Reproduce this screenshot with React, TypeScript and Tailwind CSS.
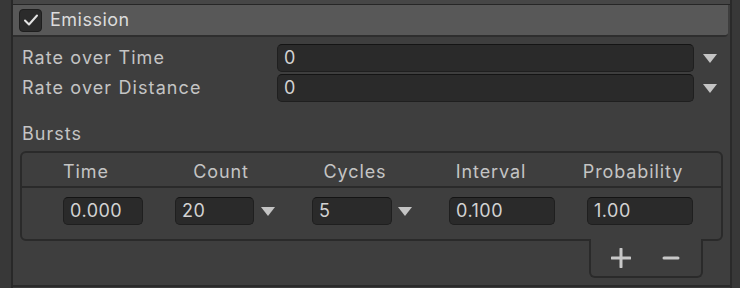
import React from 'react';

const font = { fontFamily: 'Inter, "Noto Sans", sans-serif' };

function Arrow() {
  return (
    <svg width="14" height="9" viewBox="0 0 14 9" className="shrink-0">
      <polygon points="0,0 14,0 7,9" fill="#c4c4c4" />
    </svg>
  );
}

function Field({ value, w, h = 28 }: { value: string; w: string; h?: number }) {
  return (
    <div
      className={`${w} flex items-center rounded-[5px] border border-[#1f1f1f] border-t-[#141414] bg-[#2a2a2a] pl-[6px] text-[18px] tracking-[0.5px] text-[#d2d2d2]`}
      style={{ height: h }}
    >
      {value}
    </div>
  );
}

export default function App() {
  const cols = [
    { label: 'Time', w: 'w-[128px]' },
    { label: 'Count', w: 'w-[142px]' },
    { label: 'Cycles', w: 'w-[126px]' },
    { label: 'Interval', w: 'w-[146px]' },
    { label: 'Probability', w: 'w-[138px]' },
  ];

  return (
    <div className="flex h-[288px] w-[740px] overflow-hidden bg-[#383838] leading-none" style={font}>
      <div className="w-[11px] shrink-0 bg-[#383838]" />
      <div className="w-[2px] shrink-0 bg-[#282828]" />

      <div className="flex w-[717px] flex-col bg-[#3e3e3e]">
        <div className="h-[4px] bg-[#464646]" />
        <div className="h-[1px] bg-[#262626]" />

        {/* foldout header */}
        <div className="mr-[2px] flex h-[32px] items-center gap-[8px] rounded-br-[4px] border-b-2 border-[#2e2e2e] bg-[#585858] pl-[6px]">
          <div className="flex h-[23px] w-[23px] items-center justify-center rounded-[4px] border border-[#1e1e1e] bg-[#2b2b2b]">
            <svg width="16" height="14" viewBox="0 0 16 14">
              <path d="M2 7.5 L6 11.5 L14 2.5" fill="none" stroke="#e4e4e4" strokeWidth="2" strokeLinecap="round" strokeLinejoin="round" />
            </svg>
          </div>
          <span className="text-[18px] tracking-[0.5px] text-[#dcdcdc]">Emission</span>
        </div>

        <div className="flex flex-1 flex-col pl-[7px] pt-[6px]">
          <div className="flex h-[30px] items-center">
            <span className="w-[257px] pl-[2px] text-[18px] tracking-[1.1px] text-[#c4c4c4]">Rate over Time</span>
            <Field value="0" w="w-[417px]" />
            <div className="ml-[9px]"><Arrow /></div>
          </div>
          <div className="flex h-[30px] items-center">
            <span className="w-[257px] pl-[2px] text-[18px] tracking-[1.1px] text-[#c4c4c4]">Rate over Distance</span>
            <Field value="0" w="w-[417px]" />
            <div className="ml-[9px]"><Arrow /></div>
          </div>

          <div className="mt-[16px] flex h-[30px] items-center pl-[2px] text-[18px] tracking-[1px] text-[#c4c4c4]">Bursts</div>

          {/* bursts table */}
          <div className="mt-[2px] w-[703px] rounded-[6px] border-2 border-[#2a2a2a]">
            <div className="flex h-[35px] items-center border-b-2 border-[#2a2a2a] pt-[4px]">
              {cols.map((c) => (
                <div key={c.label} className={`${c.w} text-center text-[18px] tracking-[0.9px] text-[#c4c4c4]`}>
                  {c.label}
                </div>
              ))}
            </div>
            <div className="flex h-[51px] items-start pl-[41px] pt-[9px]">
              <Field value="0.000" w="w-[80px]" />
              <div className="ml-[32px]"><Field value="20" w="w-[79px]" /></div>
              <div className="ml-[7px] mt-[10px]"><Arrow /></div>
              <div className="ml-[37px]"><Field value="5" w="w-[80px]" /></div>
              <div className="ml-[6px] mt-[10px]"><Arrow /></div>
              <div className="ml-[37px]"><Field value="0.100" w="w-[106px]" /></div>
              <div className="ml-[32px]"><Field value="1.00" w="w-[106px]" /></div>
            </div>
          </div>

          <div className="flex w-[703px] justify-end pr-[20px]">
            <div className="relative -mt-[2px] flex h-[39px] w-[114px] items-center rounded-b-[6px] border-2 border-t-0 border-[#2a2a2a] bg-[#3e3e3e]">
              <svg width="20" height="20" viewBox="0 0 20 20" className="ml-[20px] mt-[1px]">
                <path d="M10 1 V19 M1 10 H19" stroke="#c8c8c8" strokeWidth="3" strokeLinecap="round" />
              </svg>
              <svg width="18" height="4" viewBox="0 0 18 4" className="ml-[31px] mt-[1px]">
                <path d="M2 2 H16" stroke="#c8c8c8" strokeWidth="3" strokeLinecap="round" />
              </svg>
            </div>
          </div>
        </div>

        <div className="h-[2px] bg-[#2a2a2a]" />
        <div className="h-[1px] bg-[#3a3a3a]" />
      </div>

      <div className="w-[2px] shrink-0 bg-[#2a2a2a]" />
      <div className="flex-1 bg-[#383838]" />
    </div>
  );
}
